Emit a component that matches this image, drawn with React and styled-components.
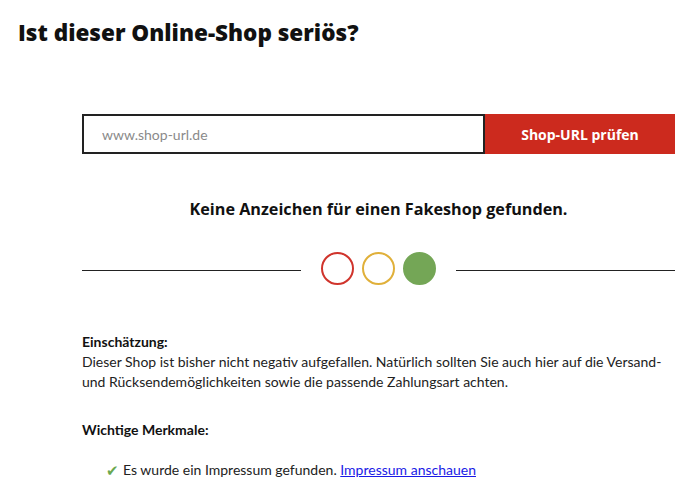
import React from "react";
import styled, { createGlobalStyle } from "styled-components";

const GlobalStyle = createGlobalStyle`
  body {
    margin: 0;
    background: #fff;
    font-family: Lato, "Open Sans", sans-serif;
    color: #111;
  }
`;

const headingFont = `"Open Sans", Lato, sans-serif`;

const Page = styled.div`
  padding: 18px 25px 0 18px;
`;

const Title = styled.h1`
  margin: 0;
  font-family: ${headingFont};
  font-size: 22.5px;
  font-weight: 800;
  line-height: 30px;
  color: #111;
`;

const Content = styled.div`
  margin: 66px 0 0 64px;
`;

const SearchRow = styled.form`
  display: flex;
  height: 40px;
`;

const UrlInput = styled.input`
  flex: 0 0 403px;
  box-sizing: border-box;
  border: 2px solid #222;
  padding: 0 18px;
  font-family: inherit;
  font-size: 14px;
  color: #333;
  outline: none;

  &::placeholder {
    color: #8a8a8a;
  }
`;

const CheckButton = styled.button`
  flex: 1;
  border: none;
  background: #cc2a1e;
  color: #fff;
  font-family: ${headingFont};
  font-size: 14px;
  font-weight: 700;
  cursor: pointer;
`;

const Verdict = styled.h2`
  margin: 43px 0 0;
  text-align: center;
  font-family: ${headingFont};
  font-size: 16.2px;
  font-weight: 700;
  line-height: 24px;
`;

const LightRow = styled.div`
  display: flex;
  align-items: center;
  margin-top: 31px;
  gap: 20px;
`;

const Rule = styled.div`
  flex: 1;
  height: 1px;
  background: #222;
  margin-top: 4px;
`;

const Lights = styled.div`
  display: flex;
  gap: 8px;
`;

const Light = styled.span`
  box-sizing: border-box;
  width: 33px;
  height: 33px;
  border-radius: 50%;
  border: 2px solid ${(p) => p.color};
  background: ${(p) => (p.on ? p.color : "transparent")};
`;

const Section = styled.div`
  margin-top: ${(p) => p.top}px;
  font-size: 14px;
  line-height: 20px;
  color: #222;
`;

const Label = styled.div`
  font-weight: 700;
  color: #111;
`;

const Text = styled.p`
  margin: 0;
`;

const FeatureList = styled.ul`
  list-style: none;
  margin: 20px 0 0;
  padding: 0 0 0 24px;
`;

const Feature = styled.li`
  display: flex;
  align-items: center;
  gap: 4px;
`;

const Tick = styled.span`
  color: #6aa84f;
  font-size: 15px;
`;

const Link = styled.a`
  color: #1a1ae6;
  text-decoration: underline;
`;

export default function App() {
  return (
    <>
      <GlobalStyle />
      <Page>
        <Title>Ist dieser Online-Shop seriös?</Title>
        <Content>
          <SearchRow onSubmit={(e) => e.preventDefault()}>
            <UrlInput placeholder="www.shop-url.de" />
            <CheckButton type="submit">Shop-URL prüfen</CheckButton>
          </SearchRow>

          <Verdict>Keine Anzeichen für einen Fakeshop gefunden.</Verdict>

          <LightRow>
            <Rule />
            <Lights>
              <Light color="#d0342c" />
              <Light color="#e0b03a" />
              <Light color="#74a656" on />
            </Lights>
            <Rule />
          </LightRow>

          <Section top={47}>
            <Label>Einschätzung:</Label>
            <Text>
              Dieser Shop ist bisher nicht negativ aufgefallen. Natürlich sollten Sie auch hier auf die Versand-
              und Rücksendemöglichkeiten sowie die passende Zahlungsart achten.
            </Text>
          </Section>

          <Section top={28}>
            <Label>Wichtige Merkmale:</Label>
            <FeatureList>
              <Feature>
                <Tick>✔</Tick>
                <span>
                  Es wurde ein Impressum gefunden. <Link href="#">Impressum anschauen</Link>
                </span>
              </Feature>
            </FeatureList>
          </Section>
        </Content>
      </Page>
    </>
  );
}
